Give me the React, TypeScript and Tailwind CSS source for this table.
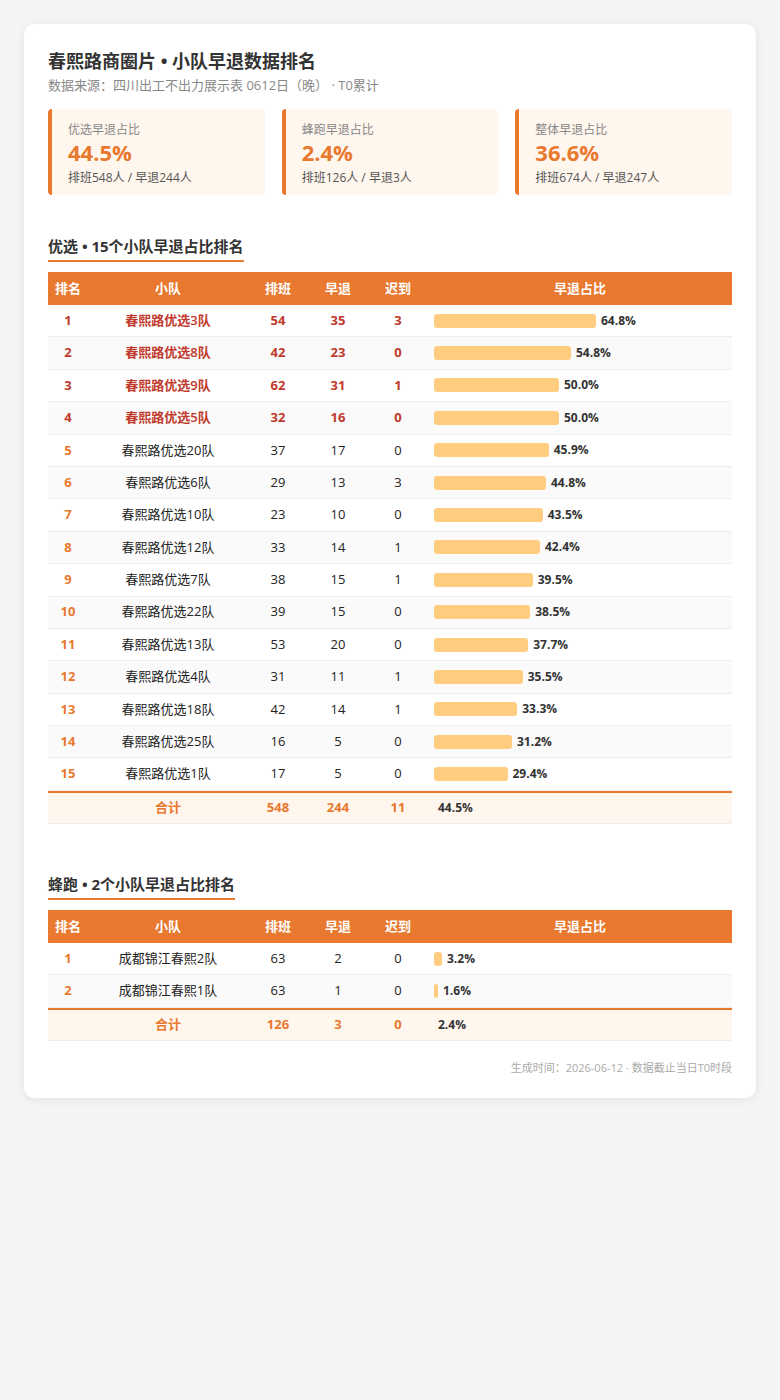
import React from "react";

type Row = { rank: number; team: string; pb: number; zt: number; cd: number; pct: number };

const youxuan: Row[] = [
  { rank: 1, team: "春熙路优选3队", pb: 54, zt: 35, cd: 3, pct: 64.8 },
  { rank: 2, team: "春熙路优选8队", pb: 42, zt: 23, cd: 0, pct: 54.8 },
  { rank: 3, team: "春熙路优选9队", pb: 62, zt: 31, cd: 1, pct: 50.0 },
  { rank: 4, team: "春熙路优选5队", pb: 32, zt: 16, cd: 0, pct: 50.0 },
  { rank: 5, team: "春熙路优选20队", pb: 37, zt: 17, cd: 0, pct: 45.9 },
  { rank: 6, team: "春熙路优选6队", pb: 29, zt: 13, cd: 3, pct: 44.8 },
  { rank: 7, team: "春熙路优选10队", pb: 23, zt: 10, cd: 0, pct: 43.5 },
  { rank: 8, team: "春熙路优选12队", pb: 33, zt: 14, cd: 1, pct: 42.4 },
  { rank: 9, team: "春熙路优选7队", pb: 38, zt: 15, cd: 1, pct: 39.5 },
  { rank: 10, team: "春熙路优选22队", pb: 39, zt: 15, cd: 0, pct: 38.5 },
  { rank: 11, team: "春熙路优选13队", pb: 53, zt: 20, cd: 0, pct: 37.7 },
  { rank: 12, team: "春熙路优选4队", pb: 31, zt: 11, cd: 1, pct: 35.5 },
  { rank: 13, team: "春熙路优选18队", pb: 42, zt: 14, cd: 1, pct: 33.3 },
  { rank: 14, team: "春熙路优选25队", pb: 16, zt: 5, cd: 0, pct: 31.2 },
  { rank: 15, team: "春熙路优选1队", pb: 17, zt: 5, cd: 0, pct: 29.4 },
];

const fengpao: Row[] = [
  { rank: 1, team: "成都锦江春熙2队", pb: 63, zt: 2, cd: 0, pct: 3.2 },
  { rank: 2, team: "成都锦江春熙1队", pb: 63, zt: 1, cd: 0, pct: 1.6 },
];

const cols = "grid grid-cols-[40px_160px_60px_60px_60px_1fr] items-center";

function SummaryCard({ label, value, sub }: { label: string; value: string; sub: string }) {
  return (
    <div className="flex-1 h-[86px] rounded-[4px] bg-[#fff6ee] border-l-4 border-[#e8792f] pl-4 pt-[12px]">
      <div className="text-[12px] leading-[18px] text-[#888]">{label}</div>
      <div className="text-[22px] leading-[26px] font-bold text-[#e8792f]">{value}</div>
      <div className="text-[12px] leading-[20px] text-[#555] mt-[3px]">{sub}</div>
    </div>
  );
}

function Table({ rows, total, highlightTop }: { rows: Row[]; total: { pb: number; zt: number; cd: number; pct: string }; highlightTop: number }) {
  return (
    <div className="text-[13px]">
      <div className={`${cols} h-[33px] bg-[#e8792f] text-white font-bold`}>
        <div className="text-center">排名</div>
        <div className="text-center">小队</div>
        <div className="text-center">排班</div>
        <div className="text-center">早退</div>
        <div className="text-center">迟到</div>
        <div className="text-center">早退占比</div>
      </div>
      {rows.map((r, i) => {
        const top = r.rank <= highlightTop;
        return (
          <div
            key={r.rank}
            className={`${cols} h-[32.4px] border-b border-[#eeeeee] ${i % 2 === 1 ? "bg-[#fafafa]" : "bg-white"}`}
          >
            <div className={`text-center font-bold ${top ? "text-[#c0392b]" : "text-[#e8792f]"}`}>{r.rank}</div>
            <div className={`text-center ${top ? "text-[#c0392b] font-semibold" : "text-[#222]"}`}>{r.team}</div>
            <div className={`text-center ${top ? "text-[#c0392b] font-bold" : "text-[#222]"}`}>{r.pb}</div>
            <div className={`text-center ${top ? "text-[#c0392b] font-bold" : "text-[#222]"}`}>{r.zt}</div>
            <div className={`text-center ${top ? "text-[#c0392b] font-bold" : "text-[#222]"}`}>{r.cd}</div>
            <div className="flex items-center pl-[6px]">
              <div className="h-[14px] rounded-[3px] bg-[#ffcc80]" style={{ width: `${r.pct * 2.5}px` }} />
              <span className="ml-[5px] text-[12px] font-bold text-[#333]">{r.pct.toFixed(1)}%</span>
            </div>
          </div>
        );
      })}
      <div className={`${cols} h-[33px] bg-[#fff6ee] border-t-2 border-b border-t-[#e8792f] border-b-[#eeeeee] font-bold text-[#e8792f]`}>
        <div />
        <div className="text-center">合计</div>
        <div className="text-center">{total.pb}</div>
        <div className="text-center">{total.zt}</div>
        <div className="text-center">{total.cd}</div>
        <div className="pl-[10px] text-[12px] text-[#333]">{total.pct}</div>
      </div>
    </div>
  );
}

function SectionTitle({ children }: { children: React.ReactNode }) {
  return (
    <div className="flex items-start mb-[10px]">
      <span className="text-[15px] leading-[22px] font-bold text-[#333] pb-[3px] border-b-2 border-[#e8792f]">
        {children}
      </span>
    </div>
  );
}

export default function App() {
  return (
    <div
      className="min-h-[1400px] bg-[#f4f4f4] p-6"
      style={{ fontFamily: '"Open Sans", "Noto Sans CJK SC", sans-serif' }}
    >
      <div className="bg-white rounded-[10px] shadow-[0_2px_10px_rgba(0,0,0,0.07)] px-6 pt-[24px] pb-[22px]">
        <h1 className="text-[18px] leading-[26px] font-bold text-[#333]">春熙路商圈片 • 小队早退数据排名</h1>
        <div className="text-[13px] leading-[20px] text-[#888] mt-[1px]">数据来源：四川出工不出力展示表 0612日（晚） · T0累计</div>
        <div className="flex gap-[17px] mt-[14px]">
          <SummaryCard label="优选早退占比" value="44.5%" sub="排班548人 / 早退244人" />
          <SummaryCard label="蜂跑早退占比" value="2.4%" sub="排班126人 / 早退3人" />
          <SummaryCard label="整体早退占比" value="36.6%" sub="排班674人 / 早退247人" />
        </div>

        <div className="mt-[40px]">
          <SectionTitle>优选 • 15个小队早退占比排名</SectionTitle>
          <Table rows={youxuan} total={{ pb: 548, zt: 244, cd: 11, pct: "44.5%" }} highlightTop={4} />
        </div>

        <div className="mt-[49px]">
          <SectionTitle>蜂跑 • 2个小队早退占比排名</SectionTitle>
          <Table rows={fengpao} total={{ pb: 126, zt: 3, cd: 0, pct: "2.4%" }} highlightTop={0} />
        </div>

        <div className="text-right text-[11px] leading-[16px] text-[#aaa] mt-[19px]">生成时间：2026-06-12 · 数据截止当日T0时段</div>
      </div>
    </div>
  );
}
